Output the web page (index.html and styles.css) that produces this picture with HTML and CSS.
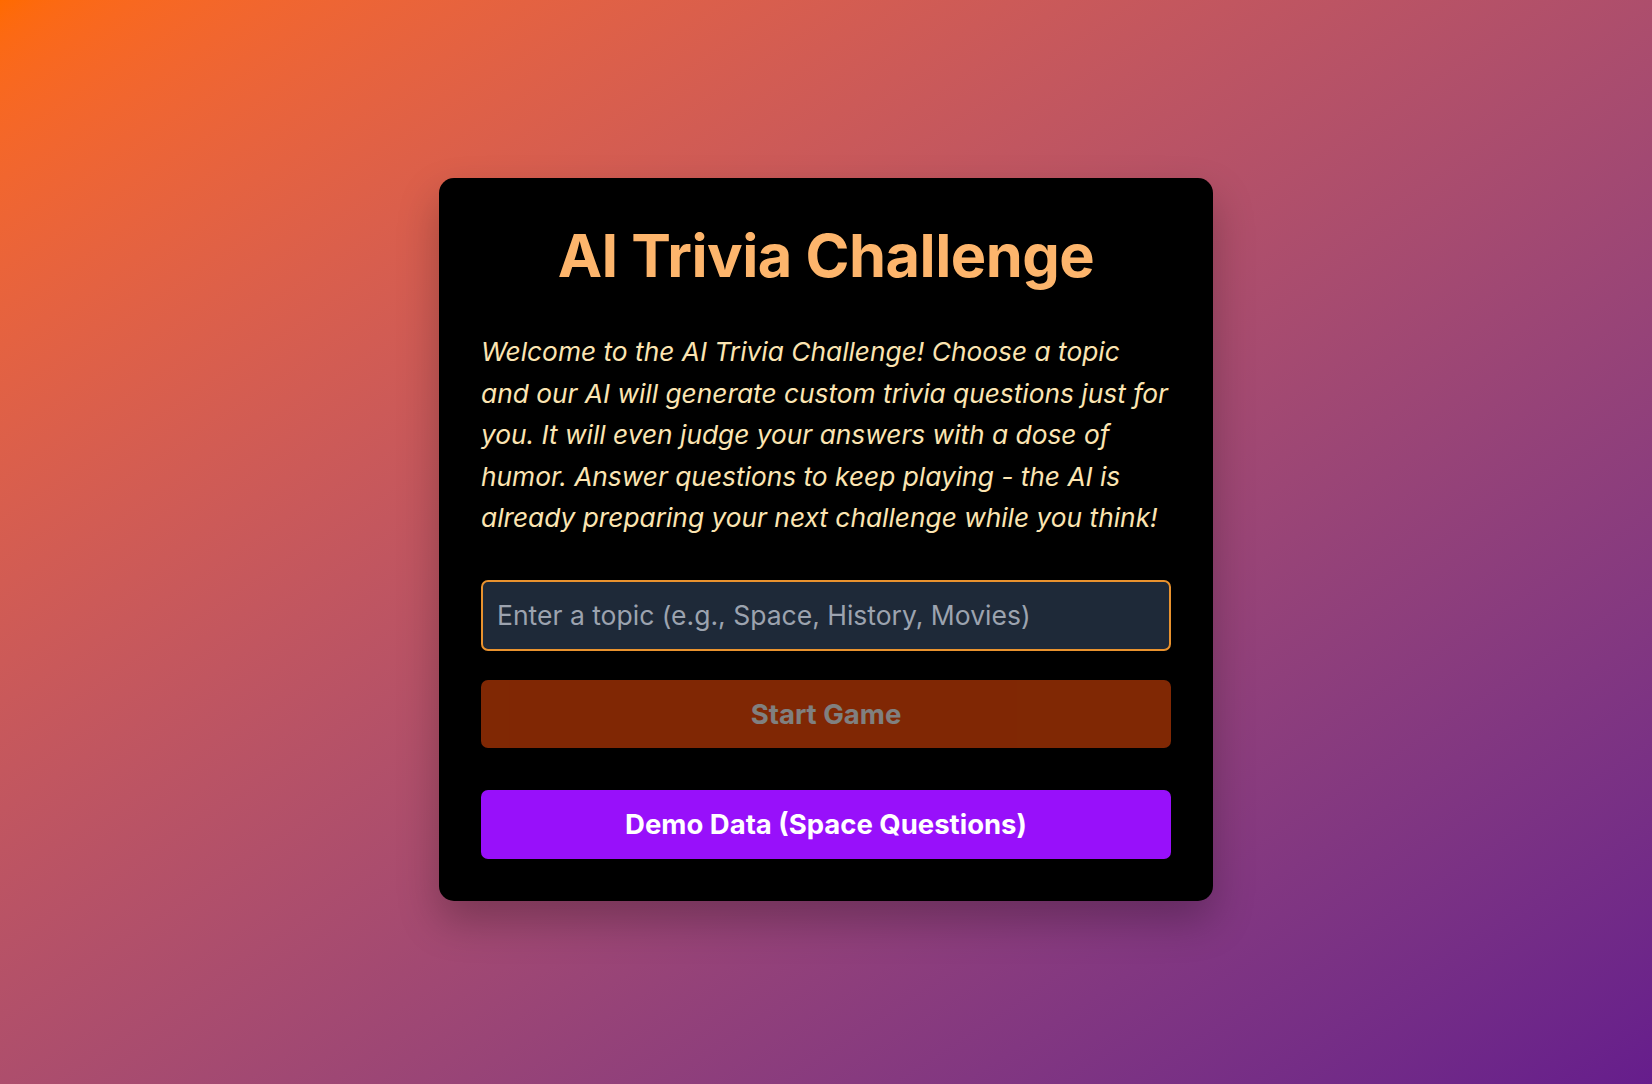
FILE: index.html
```html
<!DOCTYPE html>
<html lang="en">
<head>
<meta charset="utf-8">
<title>AI Trivia Challenge</title>
<link rel="stylesheet" href="styles.css">
</head>
<body>
<main class="page">
  <section class="card">
    <h1 class="title">AI Trivia Challenge</h1>
    <p class="intro">Welcome to the AI Trivia Challenge! Choose a topic<br>and our AI will generate custom trivia questions just for<br>you. It will even judge your answers with a dose of<br>humor. Answer questions to keep playing - the AI is<br>already preparing your next challenge while you think!</p>
    <input class="topic" type="text" placeholder="Enter a topic (e.g., Space, History, Movies)">
    <button class="btn btn-start" disabled>Start Game</button>
    <button class="btn btn-demo">Demo Data (Space Questions)</button>
  </section>
</main>
</body>
</html>
```

FILE: styles.css
```css
* { box-sizing: border-box; }
html, body { margin: 0; padding: 0; }
body {
  font-family: Inter, "Noto Sans", "Liberation Sans", sans-serif;
  background: linear-gradient(to bottom right in oklab, #ff6a00 0%, #661d8c 100%);
  min-height: 100vh;
}
.page {
  min-height: 100vh;
  display: flex;
  align-items: center;
  justify-content: center;
  padding-bottom: 5px;
}
.card {
  width: 774px;
  background: #000;
  border-radius: 15px;
  padding: 41px 42px 42px;
  display: flex;
  flex-direction: column;
  box-shadow: 0 20px 40px rgba(0,0,0,0.25);
}
.title {
  margin: 0;
  text-align: center;
  font-size: 59.5px;
  line-height: 72px;
  font-weight: 700;
  letter-spacing: -0.5px;
  color: #fdb56c;
}
.intro {
  margin: 40px 0 41px;
  font-size: 26.3px;
  line-height: 41.6px;
  font-style: italic;
  color: #fce5b2;
  white-space: nowrap;
}
.topic {
  height: 71px;
  width: 100%;
  background: #1e2938;
  border: 2px solid #e9922e;
  border-radius: 7px;
  padding: 0 14px;
  font-family: inherit;
  font-size: 26.5px;
  color: #e5e7eb;
  outline: none;
}
.topic::placeholder { color: #9ca3af; }
.btn {
  width: 100%;
  border: none;
  border-radius: 7px;
  font-family: inherit;
  font-size: 27.5px;
  font-weight: 700;
  color: #fff;
}
.btn-start {
  margin-top: 29px;
  height: 68px;
  background: #ff4f08;
  opacity: 0.5;
}
.btn-demo {
  margin-top: 42px;
  height: 69px;
  background: #9810fa;
}
```
